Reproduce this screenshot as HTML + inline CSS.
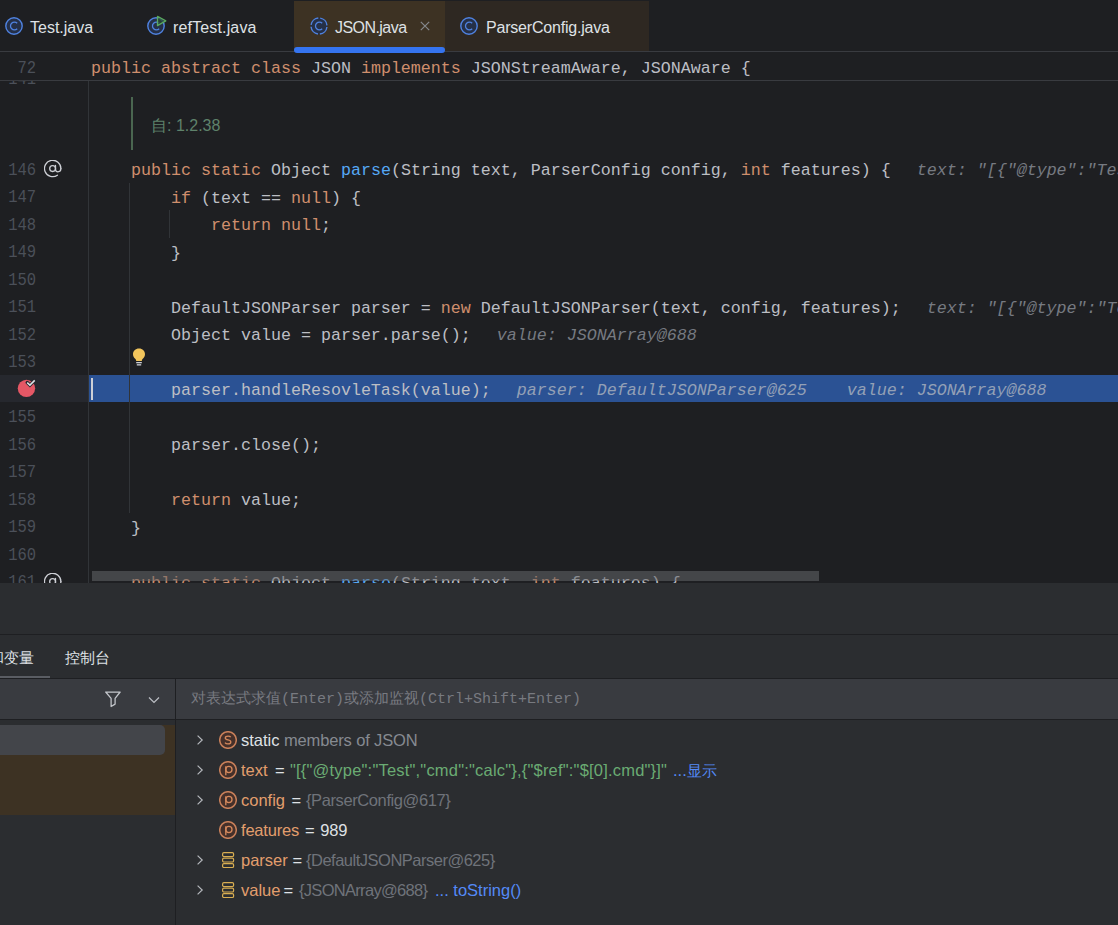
<!DOCTYPE html>
<html><head><meta charset="utf-8">
<style>
*{margin:0;padding:0;box-sizing:border-box}
html,body{width:1118px;height:925px;overflow:hidden;background:#1E1F22}
body{position:relative;font-family:"Liberation Sans",sans-serif;color:#DFE1E5}
.abs{position:absolute}
.mono{font-family:"Liberation Mono",monospace}
/* tabs */
#tabs{left:0;top:0;width:1118px;height:52px;background:#1E1F22;border-bottom:1px solid #393B40}
.tab{position:absolute;top:1px;height:50px}
.tabtxt{position:absolute;top:19px;font-size:16px;letter-spacing:-0.2px;color:#DFE1E5;white-space:nowrap;line-height:18px}
.cicon{position:absolute;width:18px;height:18px}
/* editor */
.ln{position:absolute;left:0;width:36px;padding-top:1.8px;text-align:right;color:#4B5059;font-family:"Liberation Mono",monospace;font-size:18px;transform:scaleX(0.86);transform-origin:right center;line-height:27.5px;height:27.5px;white-space:pre}
.cl{position:absolute;left:91px;padding-top:2px;color:#BCBEC4;font-family:"Liberation Mono",monospace;font-size:16.67px;line-height:27.5px;height:27.5px;white-space:pre}
.k{color:#CF8E6D}
.f{color:#56A8F5}
.h{color:#767A81;font-style:italic}
.guide{position:absolute;width:1px;background:#313438}
/* panel */
#panel{left:0;top:583px;width:1118px;height:342px;background:#2B2D30}
.vrow{position:absolute;left:241px;height:30px;line-height:30px;font-size:16.5px;white-space:pre}
.ws{word-spacing:1.5px}
.vn{color:#E29E6D}
.vg{color:#6F737A}
.vg2{color:#868A91}
.vs{color:#6AAB73}
.vb{color:#548AF7}
.chev{position:absolute;left:195px;width:12px;height:14px}
.picon{position:absolute;left:219px;width:18px;height:18px}
</style></head><body>

<!-- TAB BAR -->
<div id="tabs" class="abs">
  <div class="abs" style="left:294px;top:1px;width:151px;height:50px;background:#3D3223"></div>
  <div class="abs" style="left:445px;top:1px;width:204px;height:50px;background:#2E2822"></div>
  <svg class="abs" style="left:5px;top:17px" width="18" height="18" viewBox="0 0 18 18"><circle cx="9" cy="9" r="8.2" fill="#253048" stroke="#4F82E0" stroke-width="1.4"/><path d="M12.2 6.3A3.9 3.9 0 1 0 12.2 11.7" fill="none" stroke="#4F82E0" stroke-width="1.3"/></svg>
  <div class="tabtxt" style="left:30px;letter-spacing:0px">Test.java</div>
  <svg class="abs" style="left:147px;top:17px" width="18" height="18" viewBox="0 0 18 18"><circle cx="9" cy="9" r="8.2" fill="#253048" stroke="#4F82E0" stroke-width="1.4"/><path d="M12.2 6.3A3.9 3.9 0 1 0 12.2 11.7" fill="none" stroke="#4F82E0" stroke-width="1.3"/></svg>
  <svg class="abs" style="left:155px;top:14px" width="13" height="14" viewBox="0 0 13 14"><path d="M2.5 2.3L10.8 6.9L2.5 11.6Z" fill="rgba(40,70,45,0.75)" stroke="#5AA860" stroke-width="1.3" stroke-linejoin="round"/></svg>
  <div class="tabtxt" style="left:173px;letter-spacing:0.15px">refTest.java</div>
  <svg class="abs" style="left:310px;top:17px" width="18" height="18" viewBox="0 0 18 18"><circle cx="9" cy="9" r="8.2" fill="#253048"/><circle cx="9" cy="9" r="8.0" fill="none" stroke="#4F82E0" stroke-width="1.4" stroke-dasharray="10.57 2" stroke-dashoffset="11.57"/><path d="M12.2 6.3A3.9 3.9 0 1 0 12.2 11.7" fill="none" stroke="#4F82E0" stroke-width="1.3"/></svg>
  <div class="tabtxt" style="left:335px;letter-spacing:-0.55px">JSON.java</div>
  <svg class="abs" style="left:420px;top:21px" width="10" height="10" viewBox="0 0 10 10"><path d="M0.8 0.8L9.2 9.2M9.2 0.8L0.8 9.2" stroke="#85888D" stroke-width="1.2"/></svg>
  <div class="abs" style="left:294px;top:47px;width:151px;height:6px;background:#3574F0;border-radius:3px;z-index:5"></div>
  <svg class="abs" style="left:460px;top:17px" width="18" height="18" viewBox="0 0 18 18"><circle cx="9" cy="9" r="8.2" fill="#253048" stroke="#4F82E0" stroke-width="1.4"/><path d="M12.2 6.3A3.9 3.9 0 1 0 12.2 11.7" fill="none" stroke="#4F82E0" stroke-width="1.3"/></svg>
  <div class="tabtxt" style="left:486px">ParserConfig.java</div>
</div>

<!-- STICKY HEADER -->
<div class="abs" style="left:0;top:52px;width:1118px;height:29px;background:#1E1F22;border-bottom:1px solid #393B40">
  <div class="ln" style="top:1.2px">72</div>
  <div class="cl" style="top:1px"><span class="k">public abstract class</span> JSON <span class="k">implements</span> JSONStreamAware, JSONAware {</div>
</div>

<!-- EDITOR -->
<div class="abs" id="editor" style="left:0;top:81px;width:1118px;height:502px;background:#1E1F22;overflow:hidden">
<div class="abs" style="left:0;top:294px;width:88px;height:27px;background:#26282E"></div>
<div class="abs" style="left:89px;top:294px;width:1029px;height:27px;background:#2B5294"></div>
<div class="abs" style="left:88px;top:0;width:1px;height:502px;background:#313438"></div>
<div class="ln" style="top:-17px">141</div>
<div class="abs" style="left:131px;top:16px;width:2px;height:53px;background:#4A6650"></div>
<div class="abs" style="left:151px;top:35px;font-size:16px;line-height:20px;color:#5F826B;white-space:pre">自: 1.2.38</div>
<div class="ln" style="top:74.0px">146</div>
<div class="cl" style="top:74.0px">    <span class="k">public static</span> Object <span class="f">parse</span>(String text, ParserConfig config, <span class="k">int</span> features) {<span class="h" style="margin-left:26px">text: "[{"@type":"Test","cmd":"calc"},{"$ref":"$[0].cmd"}]"</span></div>
<div class="ln" style="top:101.5px">147</div>
<div class="cl" style="top:101.5px">        <span class="k">if</span> (text == <span class="k">null</span>) {</div>
<div class="ln" style="top:129.0px">148</div>
<div class="cl" style="top:129.0px">            <span class="k">return null</span>;</div>
<div class="ln" style="top:156.5px">149</div>
<div class="cl" style="top:156.5px">        }</div>
<div class="ln" style="top:184.0px">150</div>
<div class="cl" style="top:184.0px"></div>
<div class="ln" style="top:211.5px">151</div>
<div class="cl" style="top:211.5px">        DefaultJSONParser parser = <span class="k">new</span> DefaultJSONParser(text, config, features);<span class="h" style="margin-left:26px">text: "[{"@type":"Test","cmd":"calc"},{"$ref":"$[0].cmd"}]"</span></div>
<div class="ln" style="top:239.0px">152</div>
<div class="cl" style="top:239.0px">        Object value = parser.parse();<span class="h" style="margin-left:26px">value: JSONArray@688</span></div>
<div class="ln" style="top:266.5px">153</div>
<div class="cl" style="top:266.5px"></div>

<div class="cl" style="top:294.0px">        parser.handleResovleTask(value);<span class="h" style="margin-left:26px;color:#93A0B6">parser: DefaultJSONParser@625    value: JSONArray@688</span></div>
<div class="ln" style="top:321.5px">155</div>
<div class="cl" style="top:321.5px"></div>
<div class="ln" style="top:349.0px">156</div>
<div class="cl" style="top:349.0px">        parser.close();</div>
<div class="ln" style="top:376.5px">157</div>
<div class="cl" style="top:376.5px"></div>
<div class="ln" style="top:404.0px">158</div>
<div class="cl" style="top:404.0px">        <span class="k">return</span> value;</div>
<div class="ln" style="top:431.5px">159</div>
<div class="cl" style="top:431.5px">    }</div>
<div class="ln" style="top:459.0px">160</div>
<div class="cl" style="top:459.0px"></div>
<div class="ln" style="top:486.5px">161</div>
<div class="cl" style="top:486.5px">    <span class="k">public static</span> Object <span class="f">parse</span>(String text, <span class="k">int</span> features) {</div>
<div class="guide" style="left:129px;top:101.5px;height:330.0px"></div>
<div class="guide" style="left:169px;top:129.0px;height:27.5px"></div>
<svg class="abs" style="left:44px;top:79px" width="18" height="18" viewBox="0 0 18 18"><g fill="none" stroke="#CED0D6" stroke-width="1.3" stroke-linecap="round"><path d="M16.9 8.6A8.2 8.2 0 1 0 13.4 15.2"/><circle cx="8.6" cy="8.6" r="2.9"/><path d="M11.5 5.5V9.3Q11.5 11.8 13.9 11.8Q16.9 11.8 16.9 8.6"/></g></svg>
<svg class="abs" style="left:44px;top:491.5px" width="18" height="18" viewBox="0 0 18 18"><g fill="none" stroke="#CED0D6" stroke-width="1.3" stroke-linecap="round"><path d="M16.9 8.6A8.2 8.2 0 1 0 13.4 15.2"/><circle cx="8.6" cy="8.6" r="2.9"/><path d="M11.5 5.5V9.3Q11.5 11.8 13.9 11.8Q16.9 11.8 16.9 8.6"/></g></svg>
<svg class="abs" style="left:131px;top:265.8px" width="16" height="20" viewBox="0 0 16 20"><path d="M8 1.5C4.4 1.5 2 4 2 7.2c0 2.2 1.2 3.4 2.2 4.5.7.8 1 1.4 1 2.3h5.6c0-.9.3-1.5 1-2.3 1-1.1 2.2-2.3 2.2-4.5C14 4 11.6 1.5 8 1.5z" fill="#F2C55C"/><rect x="5.2" y="15" width="5.6" height="1.3" fill="#CED0D6"/><rect x="5.8" y="17.2" width="4.4" height="1.3" fill="#CED0D6"/></svg>
<svg class="abs" style="left:17px;top:298px;overflow:visible" width="20" height="20" viewBox="0 0 20 20"><circle cx="9.45" cy="9.35" r="8.7" fill="#E55765"/><path d="M10.2 3.6L12.9 6.1L17.7 1.4" fill="none" stroke="#26282E" stroke-width="3.4" stroke-linecap="round"/><path d="M10.2 3.6L12.9 6.1L17.7 1.4" fill="none" stroke="#DFE1E5" stroke-width="1.5"/></svg>
<div class="abs" style="left:91px;top:297.0px;width:2px;height:22px;background:#CED0D6"></div>
<div class="abs" style="left:92px;top:490px;width:727px;height:10px;background:rgba(100,102,106,0.55)"></div>
</div>

<!-- PANEL -->
<div id="panel" class="abs">
<div class="abs" style="left:0;top:51px;width:1118px;height:1px;background:#1E1F22"></div>
<div class="abs" style="left:-11px;top:63px;font-size:15px;line-height:24px;color:#DFE1E5;white-space:pre">和变量</div>
<div class="abs" style="left:65px;top:63px;font-size:15px;line-height:24px;color:#DFE1E5;white-space:pre">控制台</div>
<div class="abs" style="left:0;top:93px;width:50px;height:2px;background:#5A5D63"></div>
<div class="abs" style="left:0;top:95px;width:1118px;height:1px;background:#1E1F22"></div>
<div class="abs" style="left:0;top:96px;width:1118px;height:40px;background:#393B40"></div>
<div class="abs" style="left:0;top:136px;width:1118px;height:1px;background:#1E1F22"></div>
<div class="abs" style="left:175px;top:96px;width:1px;height:260px;background:#1E1F22"></div>
<svg class="abs" style="left:104px;top:107px" width="18" height="18" viewBox="0 0 18 18"><path d="M1.7 2H16.2L11.1 8.4V14.1L7.1 16.5V8.4Z" fill="none" stroke="#C4C7CC" stroke-width="1.25" stroke-linejoin="round"/></svg>
<svg class="abs" style="left:147px;top:111px" width="14" height="12" viewBox="0 0 14 12"><path d="M2 3.5L7 8.5L12 3.5" fill="none" stroke="#BCBFC4" stroke-width="1.2"/></svg>
<div class="abs" style="left:191px;top:106px;font-size:15px;line-height:22px;color:#787A80;white-space:pre;font-family:'Liberation Mono',monospace">对表达式求值(Enter)或添加监视(Ctrl+Shift+Enter)</div>
<div class="abs" style="left:0;top:142px;width:175px;height:90px;background:#3D3223"></div>
<div class="abs" style="left:0;top:142px;width:165px;height:30px;background:#43454A;border-radius:0 5px 5px 0"></div>
<div class="chev" style="top:150px"><svg viewBox="0 0 12 14" width="12" height="14"><path d="M2.6 2.6L7.2 7L2.6 11.4" fill="none" stroke="#B4B7BC" stroke-width="1.2"/></svg></div>
<div class="picon" style="top:148px"><svg viewBox="0 0 18 18" width="18" height="18"><circle cx="9" cy="9" r="8.3" fill="#45302A" stroke="#C9805A" stroke-width="1.5"/><path d="M11.7 6.2C11.2 5.4 10.3 5.1 9 5.1C7.4 5.1 6.3 5.9 6.3 7.0C6.3 8.2 7.4 8.6 9 8.9C10.7 9.2 11.8 9.7 11.8 11C11.8 12.2 10.6 12.9 9 12.9C7.6 12.9 6.6 12.5 6 11.6" fill="none" stroke="#D4885C" stroke-width="1.35"/></svg></div>
<div class="vrow" style="top:142px"><span style="color:#DFE1E5">static</span></div><div class="vrow vg2" style="top:142px;left:284px;letter-spacing:-0.15px">members of JSON</div>
<div class="chev" style="top:180px"><svg viewBox="0 0 12 14" width="12" height="14"><path d="M2.6 2.6L7.2 7L2.6 11.4" fill="none" stroke="#B4B7BC" stroke-width="1.2"/></svg></div>
<div class="picon" style="top:178px"><svg viewBox="0 0 18 18" width="18" height="18"><circle cx="9" cy="9" r="8.3" fill="#45302A" stroke="#C9805A" stroke-width="1.5"/><g fill="none" stroke="#D4885C" stroke-width="1.35"><path d="M6.8 5.2V14.2"/><ellipse cx="9.9" cy="8.5" rx="3.1" ry="3.1"/></g></svg></div>
<div class="vrow" style="top:172px"><span class="vn">text</span></div><div class="vrow" style="top:172px;left:275px">=</div><div class="vrow vs" style="top:172px;left:290px;letter-spacing:0.2px">"[{"@type":"Test","cmd":"calc"},{"$ref":"$[0].cmd"}]"</div><div class="vrow vb" style="top:172px;left:673px">...<span style="font-size:15px">显示</span></div>
<div class="chev" style="top:210px"><svg viewBox="0 0 12 14" width="12" height="14"><path d="M2.6 2.6L7.2 7L2.6 11.4" fill="none" stroke="#B4B7BC" stroke-width="1.2"/></svg></div>
<div class="picon" style="top:208px"><svg viewBox="0 0 18 18" width="18" height="18"><circle cx="9" cy="9" r="8.3" fill="#45302A" stroke="#C9805A" stroke-width="1.5"/><g fill="none" stroke="#D4885C" stroke-width="1.35"><path d="M6.8 5.2V14.2"/><ellipse cx="9.9" cy="8.5" rx="3.1" ry="3.1"/></g></svg></div>
<div class="vrow" style="top:202px"><span class="vn">config</span></div><div class="vrow" style="top:202px;left:291.5px">=</div><div class="vrow vg" style="top:202px;left:306px;letter-spacing:-0.4px">{ParserConfig@617}</div>
<div class="picon" style="top:238px"><svg viewBox="0 0 18 18" width="18" height="18"><circle cx="9" cy="9" r="8.3" fill="#45302A" stroke="#C9805A" stroke-width="1.5"/><g fill="none" stroke="#D4885C" stroke-width="1.35"><path d="M6.8 5.2V14.2"/><ellipse cx="9.9" cy="8.5" rx="3.1" ry="3.1"/></g></svg></div>
<div class="vrow ws" style="top:232px;letter-spacing:-0.2px"><span class="vn">features</span> = 989</div>
<div class="chev" style="top:270px"><svg viewBox="0 0 12 14" width="12" height="14"><path d="M2.6 2.6L7.2 7L2.6 11.4" fill="none" stroke="#B4B7BC" stroke-width="1.2"/></svg></div>
<div class="picon" style="top:268px"><svg viewBox="0 0 18 18" width="18" height="18"><g fill="none" stroke="#D9AE52" stroke-width="1.2"><rect x="3.6" y="1.6" width="11" height="3.9" rx="1.3"/><rect x="3.6" y="7.1" width="11" height="3.9" rx="1.3"/><rect x="3.6" y="12.6" width="11" height="3.9" rx="1.3"/></g></svg></div>
<div class="vrow" style="top:262px"><span class="vn">parser</span></div><div class="vrow" style="top:262px;left:292.5px">=</div><div class="vrow vg" style="top:262px;left:306px;letter-spacing:-0.5px">{DefaultJSONParser@625}</div>
<div class="chev" style="top:300px"><svg viewBox="0 0 12 14" width="12" height="14"><path d="M2.6 2.6L7.2 7L2.6 11.4" fill="none" stroke="#B4B7BC" stroke-width="1.2"/></svg></div>
<div class="picon" style="top:298px"><svg viewBox="0 0 18 18" width="18" height="18"><g fill="none" stroke="#D9AE52" stroke-width="1.2"><rect x="3.6" y="1.6" width="11" height="3.9" rx="1.3"/><rect x="3.6" y="7.1" width="11" height="3.9" rx="1.3"/><rect x="3.6" y="12.6" width="11" height="3.9" rx="1.3"/></g></svg></div>
<div class="vrow" style="top:292px"><span class="vn">value</span></div><div class="vrow" style="top:292px;left:283.5px">=</div><div class="vrow vg" style="top:292px;left:299px;letter-spacing:-0.7px">{JSONArray@688}</div><div class="vrow vb" style="top:292px;left:435px">... toString()</div>
</div>

</body></html>
